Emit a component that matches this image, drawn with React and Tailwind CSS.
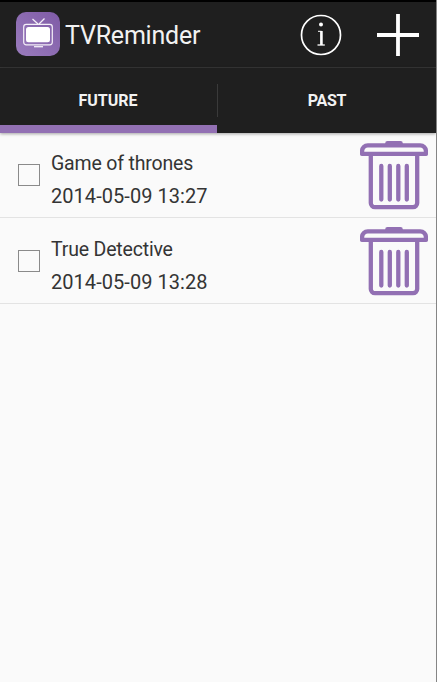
import React from 'react';

const reminders = [
  { id: 1, title: 'Game of thrones', date: '2014-05-09 13:27' },
  { id: 2, title: 'True Detective', date: '2014-05-09 13:28' },
];

const Logo = () => (
  <div className="w-11 h-11 mb-px rounded-[10px] bg-linear-to-tr from-[#9a7cbd] to-[#7f5ba6]">
    <svg width="44" height="44" viewBox="0 0 44 44" fill="none" stroke="#f4eff8">
      <path d="M22 12L16.5 7M23 12L28.5 6.5" strokeWidth="1.3" />
      <rect x="7.7" y="12.4" width="28.6" height="20.4" rx="2.5" strokeWidth="1.2" />
      <rect x="10" y="15" width="24" height="15.3" rx="2.5" fill="#fff" stroke="none" />
      <path d="M18 34.7h9" strokeWidth="1.3" />
    </svg>
  </div>
);

const InfoIcon = () => (
  <svg width="42" height="42" viewBox="0 0 42 42" fill="none" stroke="#fff">
    <circle cx="21" cy="21" r="19.5" strokeWidth="1.7" />
    <circle cx="21" cy="10.6" r="2" fill="#fff" stroke="none" />
    <path d="M18 17.3h3.6v13.4" strokeWidth="1" />
    <path d="M21.4 17v14" strokeWidth="2.6" />
    <path d="M17.5 31h7.3" strokeWidth="1.3" />
  </svg>
);

const PlusIcon = () => (
  <svg width="42" height="42" viewBox="0 0 42 42" stroke="#fff" strokeWidth="3.8">
    <path d="M21 0v42M0 21h42" />
  </svg>
);

const TrashIcon = () => (
  <svg width="68" height="69" viewBox="0 0 68 69" fill="none" stroke="#9270b3" strokeWidth="4.3">
    <path d="M27.5 2.4h13" strokeWidth="4.7" strokeLinecap="round" />
    <path d="M2.1 12.9V10a5.7 5.7 0 0 1 5.7-5.7h52.4a5.7 5.7 0 0 1 5.7 5.7v2.9z" strokeLinejoin="round" />
    <path d="M10.8 14v48a4.2 4.2 0 0 0 4.2 4.2h38a4.2 4.2 0 0 0 4.2-4.2V14" />
    <path d="M21.3 25v33.5M29.8 25v33.5M38.3 25v33.5M46.8 25v33.5" strokeLinecap="round" />
  </svg>
);

const Reminder = ({ title, date }) => (
  <li className="h-[86px] first:h-[85px] pt-px first:pt-0 flex items-start border-b border-[#e3e3e3] pl-[18px] pr-2">
    <div className="w-[22px] h-[22px] mt-[31px] border border-[#8a8a8a]" />
    <div className="flex-1 ml-[11px] pt-[14px] text-[#343434]">
      <p className="text-[19.5px] leading-[33px] tracking-[-0.18px]">{title}</p>
      <p className="text-[20px] leading-[33px] tracking-[0.05px]">{date}</p>
    </div>
    <div className="mt-2">
      <TrashIcon />
    </div>
  </li>
);

const App = () => {
  return (
    <div className="w-[437px] h-[682px] flex flex-col overflow-hidden bg-[#fafafa] border-r border-[#858585] font-[Roboto,sans-serif]">
      <header className="h-[68px] shrink-0 flex items-center bg-[#1f1f1f] border-t-2 border-t-black border-b border-b-[#363636] pl-4 pr-[17px]">
        <Logo />
        <h1 className="ml-[5px] pt-[2px] flex-1 text-[25px] tracking-[-0.2px] text-[#f2f2f2]">TVReminder</h1>
        <div className="flex items-center gap-[35px]">
          <InfoIcon />
          <PlusIcon />
        </div>
      </header>

      <nav className="h-[65px] shrink-0 flex bg-[#1f1f1f] text-base font-bold text-[#f2f2f2] shadow-[0_1px_3px_rgba(0,0,0,0.35)]">
        <div className="w-[217px] flex items-center justify-center border-b-8 border-[#9270b3] pt-[9px] pr-px">
          FUTURE
        </div>
        <div className="w-px h-[33px] mt-4 bg-[#3a3a3a]" />
        <div className="flex-1 flex items-center justify-center tracking-[-0.3px] pt-px">PAST</div>
      </nav>

      <ul>
        {reminders.map((item) => (
          <Reminder key={item.id} title={item.title} date={item.date} />
        ))}
      </ul>
    </div>
  );
};

export default App;
